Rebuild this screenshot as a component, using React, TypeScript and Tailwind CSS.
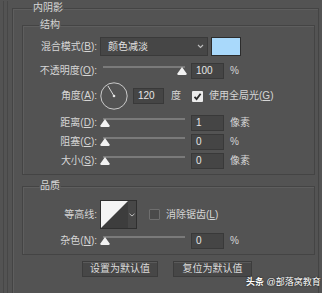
import React from "react"

const Thumb = ({ left }: { left: number }) => (
  <svg className="absolute top-[4px]" style={{ left }} width="10" height="8" viewBox="0 0 10 8">
    <path d="M5 0 L9.6 6.4 Q10 8 8.5 8 L1.5 8 Q0 8 0.4 6.4 Z" fill="#f2f2f2" />
  </svg>
)

const Slider = ({ pos }: { pos: number }) => (
  <div className="relative w-[88px] h-full">
    <div className="absolute left-[3px] right-[3px] top-[3px] h-[2px] bg-[#7a7a7a]" />
    <Thumb left={pos} />
  </div>
)

const NumBox = ({ value, w = "w-[33px]" }: { value: string; w?: string }) => (
  <div className={`${w} h-[16px] bg-[#454545] border border-[#393939] text-[#e6e6e6] pl-[4px] leading-[14px]`}>
    {value}
  </div>
)

const Label = ({ children }: { children: React.ReactNode }) => (
  <div className="w-[74px] shrink-0 text-right whitespace-nowrap">{children}</div>
)

const U = ({ c }: { c: string }) => <span className="underline underline-offset-1">{c}</span>

const SliderRow = ({ label, pos, value, unit, className = "" }: { label: React.ReactNode; pos: number; value: string; unit: string; className?: string }) => (
  <div className={`flex items-center h-[16px] ${className}`}>
    <Label>{label}</Label>
    <div className="ml-[3px] h-full">
      <Slider pos={pos} />
    </div>
    <div className="ml-[3px]">
      <NumBox value={value} />
    </div>
    <div className="ml-[6px]">{unit}</div>
  </div>
)

const Check = ({ checked }: { checked?: boolean }) =>
  checked ? (
    <div className="w-[11px] h-[11px] bg-[#ececec] rounded-[1px] flex items-center justify-center">
      <svg width="9" height="9" viewBox="0 0 9 9">
        <path d="M1.5 4.8 L3.6 7 L7.6 1.8" stroke="#2a2a2a" strokeWidth="1.8" fill="none" />
      </svg>
    </div>
  ) : (
    <div className="w-[11px] h-[11px] bg-[#4a4a4a] border border-[#6e6e6e] rounded-[1px]" />
  )

export default function App() {
  return (
    <div className="relative w-[322px] h-[293px] overflow-hidden bg-[#535353] text-[10px] leading-[14px] text-[#d6d6d6] font-['Liberation_Sans','Noto_Sans_CJK_SC',sans-serif]">
      <div className="h-full ml-[3px] border-l border-[#474747] pl-[3px]">
        <div className="h-full border-l border-[#474747] pl-[4px]">
          <fieldset className="mt-[1px] w-[307px] h-[320px] border border-[#444444] shadow-[inset_1px_1px_0_#5e5e5e] p-0 m-0">
            <legend className="ml-[19px] px-[1px] leading-[14px]">内阴影</legend>

            <fieldset className="ml-[9px] mt-[3px] w-[293px] border border-[#444444] shadow-[inset_1px_1px_0_#5e5e5e] p-0 pt-[5px] pb-[5px]">
              <legend className="ml-[16px] px-[1px] leading-[14px]">结构</legend>

              <div className="flex items-center h-[19px]">
                <Label>
                  混合模式(<U c="B" />):
                </Label>
                <div className="ml-[3px] w-[108px] h-[19px] bg-[#464646] border border-[#3a3a3a] flex items-center justify-between pl-[7px] pr-[3px] text-[#e2e2e2]">
                  <span>颜色减淡</span>
                  <svg width="7" height="5" viewBox="0 0 7 5">
                    <path d="M1 1 L3.5 3.5 L6 1" stroke="#bdbdbd" strokeWidth="1.1" fill="none" />
                  </svg>
                </div>
                <div className="ml-[3px] w-[30px] h-[19px] bg-[#a9d9fb] border border-[#2c2c2c]" />
              </div>

              <SliderRow className="mt-[7px]" label={<>不透明度(<U c="O" />):</>} pos={77} value="100" unit="%" />

              <div className="flex items-center h-[28px] mt-[3px]">
                <Label>
                  角度(<U c="A" />):
                </Label>
                <svg className="ml-[3px]" width="28" height="28" viewBox="0 0 28 28">
                  <circle cx="14" cy="14" r="13.2" stroke="#c9c9c9" strokeWidth="1" fill="none" />
                  <path d="M14 14 L8 4" stroke="#d8d8d8" strokeWidth="1" />
                  <circle cx="14" cy="14" r="1.3" fill="#e6e6e6" />
                </svg>
                <div className="ml-[5px]">
                  <NumBox value="120" w="w-[31px]" />
                </div>
                <div className="ml-[7px]">度</div>
                <div className="ml-[11px]">
                  <Check checked />
                </div>
                <div className="ml-[6px] whitespace-nowrap">
                  使用全局光(<U c="G" />)
                </div>
              </div>

              <SliderRow className="mt-[5px]" label={<>距离(<U c="D" />):</>} pos={0} value="1" unit="像素" />
              <SliderRow className="mt-[3px]" label={<>阻塞(<U c="C" />):</>} pos={0} value="0" unit="%" />
              <SliderRow className="mt-[3px]" label={<>大小(<U c="S" />):</>} pos={0} value="0" unit="像素" />
            </fieldset>

            <fieldset className="ml-[9px] mt-[4px] w-[293px] border border-[#444444] shadow-[inset_1px_1px_0_#5e5e5e] p-0 pt-[7px] pb-[5px]">
              <legend className="ml-[16px] px-[1px] leading-[14px]">品质</legend>

              <div className="flex items-center h-[29px]">
                <Label>等高线:</Label>
                <div className="ml-[3px] w-[37px] h-[29px] border border-[#2f2f2f] flex">
                  <svg width="27" height="27" viewBox="0 0 27 27">
                    <rect width="27" height="27" fill="#3d3d3d" />
                    <path d="M0 0 L27 0 L0 27 Z" fill="#f4f4f4" />
                  </svg>
                  <div className="flex-1 bg-[#474747] flex items-center justify-center">
                    <svg width="6" height="4" viewBox="0 0 6 4">
                      <path d="M0.5 0.8 L3 3 L5.5 0.8" stroke="#bdbdbd" strokeWidth="1" fill="none" />
                    </svg>
                  </div>
                </div>
                <div className="ml-[12px]">
                  <Check />
                </div>
                <div className="ml-[6px] whitespace-nowrap">
                  消除锯齿(<U c="L" />)
                </div>
              </div>

              <SliderRow className="mt-[4px]" label={<>杂色(<U c="N" />):</>} pos={0} value="0" unit="%" />
            </fieldset>

            <div className="flex mt-[6px] ml-[69px] gap-[15px]">
              <div className="w-[76px] h-[16px] bg-[#474747] border border-[#3c3c3c] shadow-[inset_0_1px_0_#5a5a5a] flex items-center justify-center text-[#dcdcdc]">
                设置为默认值
              </div>
              <div className="w-[79px] h-[16px] bg-[#474747] border border-[#3c3c3c] shadow-[inset_0_1px_0_#5a5a5a] flex items-center justify-center text-[#dcdcdc]">
                复位为默认值
              </div>
            </div>
          </fieldset>
        </div>
      </div>

      <div className="absolute left-[246px] top-[276px] text-[9px] leading-[12px] text-white whitespace-nowrap [text-shadow:0_0_2px_rgba(0,0,0,0.8)]">
        <span className="font-bold">头条</span> @部落窝教育
      </div>
    </div>
  )
}
